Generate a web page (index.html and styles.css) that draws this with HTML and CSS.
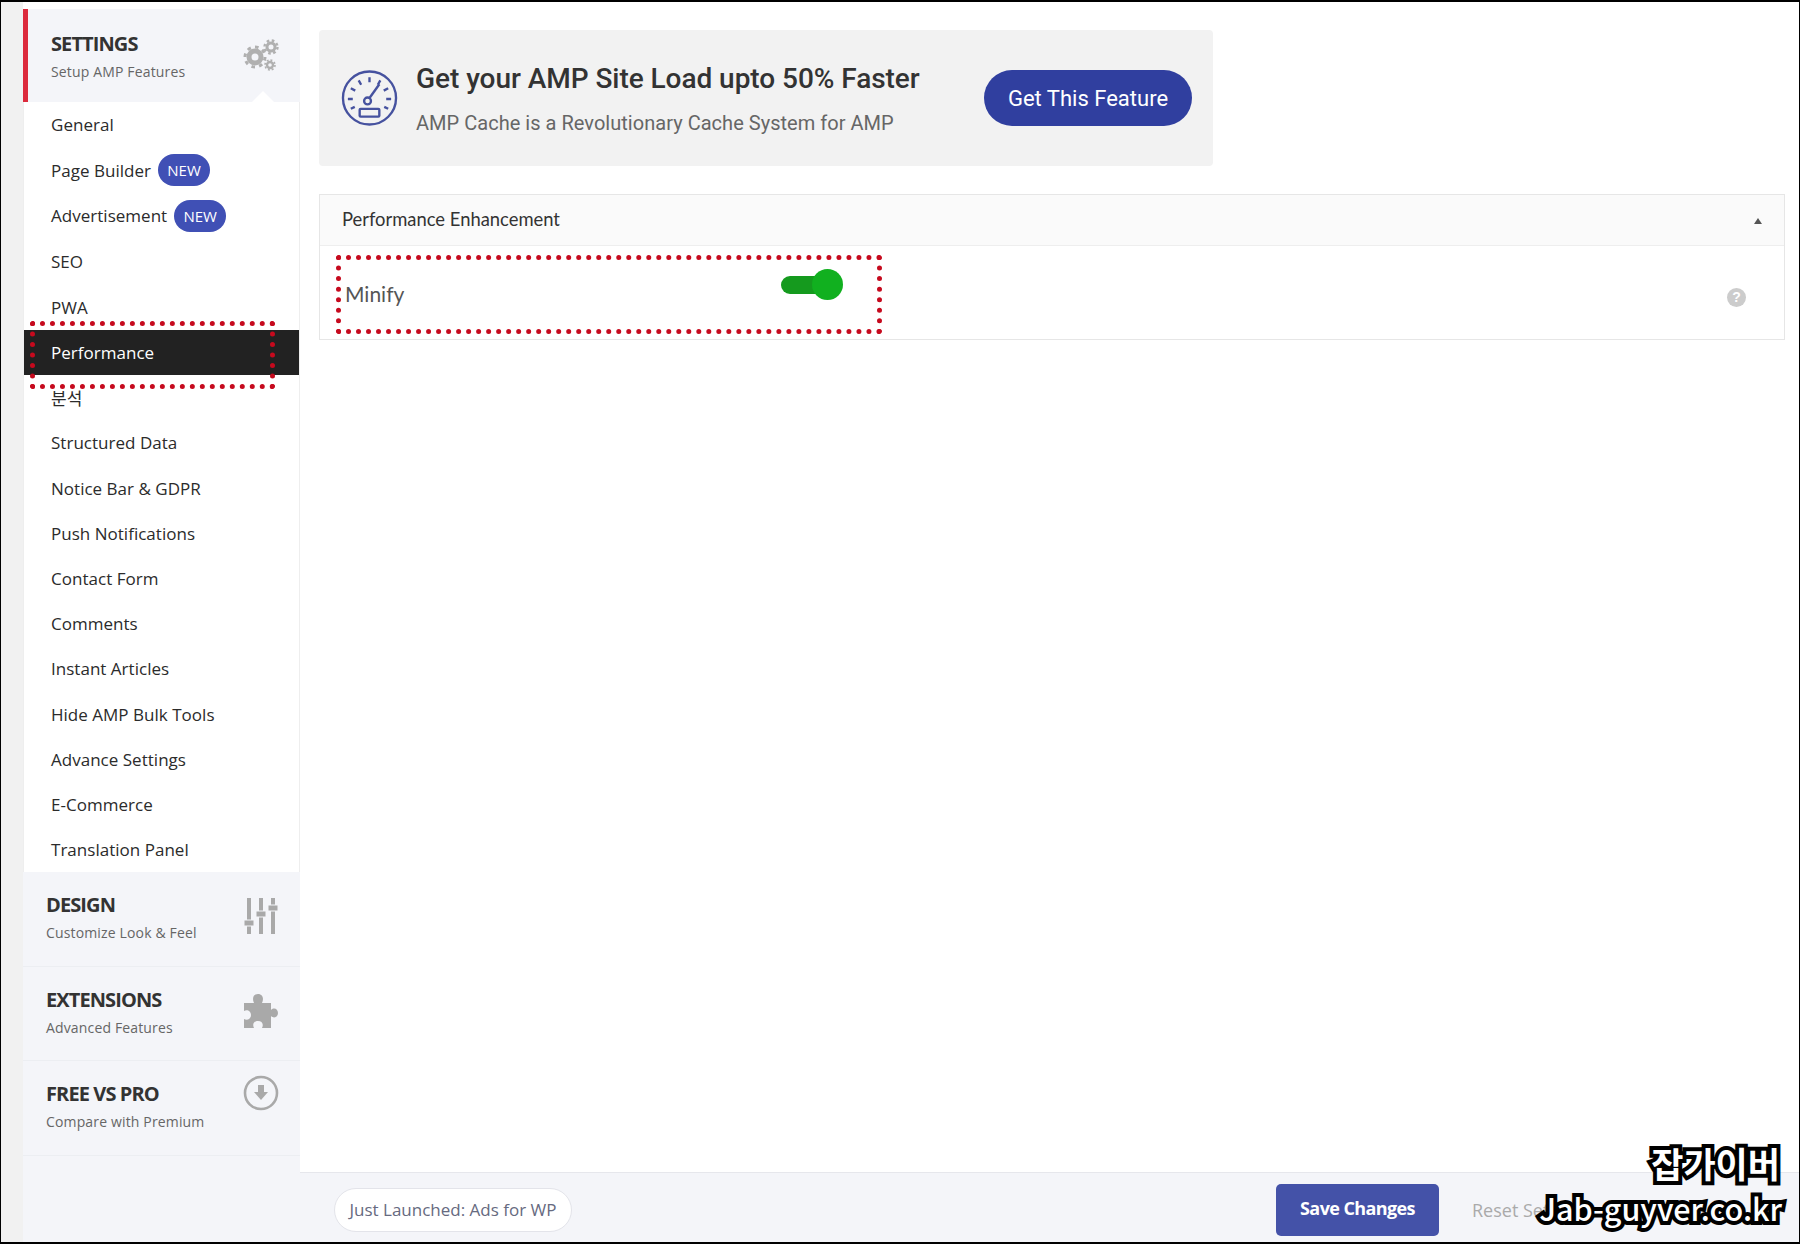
FILE: index.html
```html
<!DOCTYPE html>
<html>
<head>
  <title>AMP Settings</title>
  <link rel="stylesheet" href="styles.css">
</head>
<body>
  <div class="frame">
    <div class="rail"></div>
    <div class="sidebar">
      <div class="section active">
        <div>
          <div class="section-title">SETTINGS</div>
          <div class="section-sub">Setup AMP Features</div>
        </div>
        <svg class="section-icon" width="36" height="32" viewBox="0 0 36 32">
          <g fill="none" stroke="#b0b0b0">
            <circle cx="12" cy="18" r="6" stroke-width="5"/>
            <circle cx="12" cy="18" r="10" stroke-width="3" stroke-dasharray="3.6 4.2"/>
            <circle cx="28" cy="8" r="4" stroke-width="3"/>
            <circle cx="28" cy="8" r="6.5" stroke-width="2.4" stroke-dasharray="2.6 2.5"/>
            <circle cx="27" cy="26" r="3" stroke-width="2.4"/>
            <circle cx="27" cy="26" r="5" stroke-width="1.6" stroke-dasharray="2 1.9"/>
          </g>
        </svg>
      </div>
      <ul class="menu">
        <li>General</li>
        <li>Page Builder <span class="badge">NEW</span></li>
        <li>Advertisement <span class="badge">NEW</span></li>
        <li>SEO</li>
        <li>PWA</li>
        <li class="current">Performance</li>
        <li>분석</li>
        <li>Structured Data</li>
        <li>Notice Bar &amp; GDPR</li>
        <li>Push Notifications</li>
        <li>Contact Form</li>
        <li>Comments</li>
        <li>Instant Articles</li>
        <li>Hide AMP Bulk Tools</li>
        <li>Advance Settings</li>
        <li>E-Commerce</li>
        <li>Translation Panel</li>
      </ul>
      <div class="section">
        <div>
          <div class="section-title">DESIGN</div>
          <div class="section-sub">Customize Look &amp; Feel</div>
        </div>
        <svg class="section-icon" width="36" height="36" viewBox="0 0 36 36">
          <g fill="#a9a9a9">
            <rect x="4" y="0" width="4" height="36"/>
            <rect x="16" y="0" width="4" height="36"/>
            <rect x="28" y="0" width="4" height="36"/>
            <rect x="1" y="22" width="10" height="6" stroke="#f4f5f9" stroke-width="1"/>
            <rect x="13" y="13" width="10" height="6" stroke="#f4f5f9" stroke-width="1"/>
            <rect x="25" y="7" width="10" height="6" stroke="#f4f5f9" stroke-width="1"/>
          </g>
        </svg>
      </div>
      <div class="section">
        <div>
          <div class="section-title">EXTENSIONS</div>
          <div class="section-sub">Advanced Features</div>
        </div>
        <svg class="section-icon" width="36" height="36" viewBox="0 0 36 36">
          <path fill="#a9a9a9" d="M1 10H11C9 6 10 1 15 1C20 1 21 6 19 10H28V17C31 14 35 16 35 20C35 24 31 26 28 23V35H19C21 31 19 28 15 28C11 28 9 31 11 35H1V26C4 28 8 26 8 22C8 18 4 16 1 18Z"/>
        </svg>
      </div>
      <div class="section top-icon">
        <div>
          <div class="section-title">FREE VS PRO</div>
          <div class="section-sub">Compare with Premium</div>
        </div>
        <svg class="section-icon" width="36" height="36" viewBox="0 0 36 36">
          <circle cx="18" cy="18" r="16" fill="none" stroke="#a9a9a9" stroke-width="2.6"/>
          <path fill="#a9a9a9" d="M15 10H21V17H25L18 25L11 17H15Z"/>
        </svg>
      </div>
    </div>
    <div class="main">
      <div class="content">
        <div class="banner">
          <svg class="gauge" width="57" height="58" viewBox="0 0 58 58">
            <g fill="none" stroke="#46529f" stroke-width="2.4">
              <circle cx="29" cy="29" r="27"/>
              <path d="M29 8V13M18 11L20.5 15.500M40 11L37.500 15.500M10 19L14.500 21.500M48 19L43.500 21.500M7 30H12M46 30H51M10 40L14 38M48 40L44 38"/>
              <circle cx="27" cy="32" r="3.500"/>
              <path d="M29 29L39 15"/>
              <rect x="19" y="40" width="20" height="8" rx="1"/>
            </g>
          </svg>
          <div class="banner-text">
            <div class="banner-title">Get your AMP Site Load upto 50% Faster</div>
            <div class="banner-sub">AMP Cache is a Revolutionary Cache System for AMP</div>
          </div>
          <button class="feature-btn">Get This Feature</button>
        </div>
        <div class="card">
          <div class="card-head">
            <span>Performance Enhancement</span>
            <span class="caret"></span>
          </div>
          <div class="card-row">
            <div class="minify-label">Minify</div>
            <div class="toggle"><div class="knob"></div></div>
            <div class="help">?</div>
          </div>
        </div>
      </div>
      <div class="footer">
        <div class="pill">Just Launched: Ads for WP</div>
        <div class="footer-right">
          <button class="save-btn">Save Changes</button>
          <span class="reset">Reset Settings</span>
        </div>
      </div>
    </div>
  </div>
  <div class="mark mark-menu"></div>
  <div class="mark mark-minify"></div>
  <div class="watermark">
    <div class="wm-name">잡가이버</div>
    <div class="wm-url">Jab-guyver.co.kr</div>
  </div>
</body>
</html>
```
FILE: styles.css
```css
* {
  box-sizing: border-box;
}
html, body {
  margin: 0;
  padding: 0;
}
body {
  position: relative;
  width: 1800px;
  height: 1244px;
  overflow: hidden;
  font-family: "Open Sans", "Noto Sans CJK KR", sans-serif;
  color: #333;
}
.frame {
  display: flex;
  height: 1244px;
  background: #fff;
  border: 1px solid #000;
  border-top-width: 2px;
  border-bottom-width: 2px;
}
.rail {
  width: 22px;
  background: #f1f1f1;
}

/* sidebar */
.sidebar {
  width: 277px;
  margin-top: 7px;
  background: #f4f5f9;
  display: flex;
  flex-direction: column;
}
.section {
  height: 94.5px;
  padding: 20px 21px 0 23px;
  display: flex;
  justify-content: space-between;
  align-items: flex-start;
  border-bottom: 1px solid #eceef2;
}
.section.active {
  position: relative;
  height: 93px;
  padding-top: 22px;
  padding-left: 23px;
  border-bottom: none;
  border-left: 5px solid #dc2a3c;
}
.section.active::after {
  content: "";
  position: absolute;
  right: 26px;
  bottom: 0;
  border: 11px solid transparent;
  border-top: none;
  border-bottom-color: #fff;
}
.section-title {
  font-size: 20px;
  line-height: 26px;
  font-weight: 700;
  letter-spacing: -0.9px;
  color: #333;
}
.section-sub {
  margin-top: 6px;
  font-size: 14px;
  line-height: 18px;
  letter-spacing: 0.15px;
  color: #666;
}
.section-icon {
  margin-top: 6px;
}
.section.active .section-icon {
  margin-top: 8px;
}
.top-icon .section-icon {
  margin-top: -6px;
}
.menu {
  list-style: none;
  margin: 0;
  padding: 0;
  background: #fff;
  border-left: 1px solid #eee;
  border-right: 1px solid #eee;
}
.menu li {
  height: 45.2px;
  padding-left: 27px;
  display: flex;
  align-items: center;
  font-size: 17px;
  letter-spacing: 0.02px;
  color: #2b2b2b;
}
.menu li:nth-child(-n+5) {
  height: 45.6px;
}
.menu li.current {
  background: #222;
  color: #fff;
}
.badge {
  margin-left: 7px;
  width: 52px;
  height: 32px;
  border-radius: 16px;
  background: #4050b5;
  color: #fff;
  font-size: 15px;
  letter-spacing: 0;
  display: flex;
  align-items: center;
  justify-content: center;
}

/* main area */
.main {
  flex: 1;
  display: flex;
  flex-direction: column;
}
.content {
  flex: 1;
  padding: 28px 14px 0 19px;
  background: #fff;
}
.banner {
  width: 894px;
  height: 136px;
  padding: 0 21px 0 22px;
  display: flex;
  align-items: center;
  background: #f2f2f2;
  border-radius: 4px;
}
.gauge {
  flex: none;
}
.banner-text {
  flex: 1;
  margin-left: 18px;
  font-family: Roboto, sans-serif;
}
.banner-title {
  font-size: 28px;
  line-height: 34px;
  font-weight: 500;
  letter-spacing: -0.05px;
  color: #333;
  margin-top: 2px;
}
.banner-sub {
  margin-top: 14px;
  font-size: 20px;
  line-height: 26px;
  letter-spacing: 0.03px;
  color: #666;
}
.feature-btn {
  width: 208px;
  height: 56px;
  border: none;
  border-radius: 28px;
  background: #303f9f;
  color: #fff;
  font-family: Roboto, sans-serif;
  font-size: 22px;
}
.card {
  margin-top: 28px;
  border: 1px solid #e6e6e6;
}
.card-head {
  height: 51px;
  padding: 0 22px 2px;
  display: flex;
  justify-content: space-between;
  align-items: center;
  background: #fafafa;
  border-bottom: 1px solid #eee;
  font-family: Lato, sans-serif;
  font-size: 18.4px;
  color: #333;
}
.caret {
  margin-top: 4px;
  border: 4.5px solid transparent;
  border-top: none;
  border-bottom: 6px solid #555;
}
.card-row {
  height: 93px;
  padding: 0 38px 0 25px;
  display: flex;
  align-items: center;
}
.minify-label {
  width: 436px;
  margin-top: 1px;
  font-family: Lato, sans-serif;
  font-size: 21px;
  color: #555;
}
.toggle {
  position: relative;
  width: 49px;
  height: 18px;
  margin-top: -15px;
  border-radius: 9px;
  background: #159a1e;
}
.knob {
  position: absolute;
  left: 31px;
  top: -7px;
  width: 31px;
  height: 31px;
  border-radius: 50%;
  background: #11b01f;
}
.help {
  width: 19px;
  height: 19px;
  margin-left: auto;
  margin-top: 9px;
  border-radius: 50%;
  background: #ccc;
  color: #fff;
  font-family: "Liberation Sans", sans-serif;
  font-size: 14px;
  font-weight: 700;
  line-height: 19px;
  text-align: center;
}

/* footer */
.footer {
  height: 70px;
  padding: 0 0 0 34px;
  display: flex;
  align-items: center;
  justify-content: space-between;
  background: #f4f5f9;
  border-top: 1px solid #e6e7ec;
}
.pill {
  width: 238px;
  height: 44px;
  margin-top: 4px;
  border: 1px solid #e3e4ea;
  border-radius: 22px;
  background: #fff;
  color: #666a80;
  font-size: 17px;
  display: flex;
  align-items: center;
  justify-content: center;
}
.footer-right {
  display: flex;
  align-items: center;
  margin-top: 4px;
}
.save-btn {
  width: 163px;
  height: 52px;
  padding-bottom: 4px;
  border: none;
  border-radius: 5px;
  background: #4452a8;
  color: #fff;
  font-family: "Open Sans", sans-serif;
  font-size: 18px;
  font-weight: 700;
  letter-spacing: -0.6px;
}
.reset {
  width: 360px;
  padding-left: 33px;
  font-size: 18px;
  color: #aaa;
  white-space: nowrap;
}

/* annotations drawn over the screenshot */
.mark {
  position: absolute;
  border: 5px dotted #c60a1e;
  border-radius: 3px;
}
.mark-menu {
  left: 30px;
  top: 321px;
  width: 245px;
  height: 68px;
}
.mark-minify {
  left: 336px;
  top: 255px;
  width: 546px;
  height: 79px;
}
.watermark {
  position: absolute;
  right: 18px;
  top: 1139px;
  text-align: right;
  font-family: "Noto Sans CJK KR", sans-serif;
  font-weight: 700;
  color: #fff;
  -webkit-text-stroke: 8px #000;
  paint-order: stroke fill;
}
.wm-name {
  font-size: 35px;
  line-height: 48px;
  padding-right: 2px;
}
.wm-url {
  font-size: 30.500px;
  line-height: 42px;
  font-weight: 500;
}
```
